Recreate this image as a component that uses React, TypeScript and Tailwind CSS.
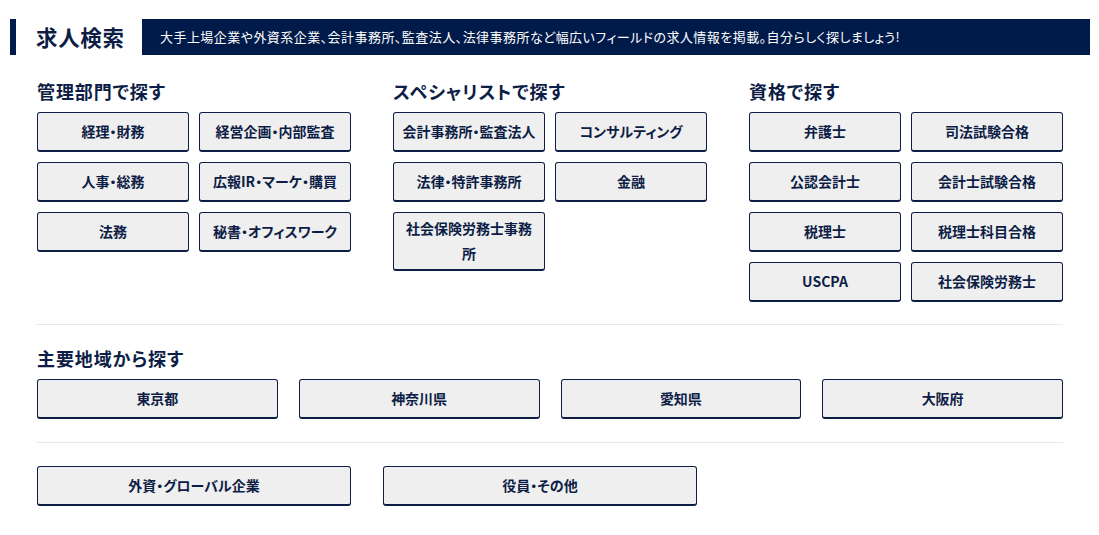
import React from "react";

const NAVY = "text-[#0d1d45]";

function Btn({ label, className = "" }: { label: string; className?: string }) {
  return (
    <a
      href="#"
      className={`flex min-h-[40px] items-center justify-center rounded-[3px] border border-b-2 border-[#0d1d45] bg-[#efefef] px-[7px] py-[3px] text-center text-[14px] font-bold leading-[25px] ${NAVY} ${className}`}
    >
      {label}
    </a>
  );
}

function Heading({ children }: { children: React.ReactNode }) {
  return (
    <h3 className={`mb-[9px] text-[18px] font-bold leading-[24px] tracking-[0.05em] ${NAVY}`}>{children}</h3>
  );
}

function Col({ title, items }: { title: string; items: string[] }) {
  return (
    <div>
      <Heading>{title}</Heading>
      <div className="grid grid-cols-2 gap-x-[10px] gap-y-[10px] items-start">
        {items.map((i) => (
          <Btn key={i} label={i} />
        ))}
      </div>
    </div>
  );
}

export default function App() {
  return (
    <div
      className="w-[1099px] min-h-[535px] bg-white [font-feature-settings:'palt']"
      style={{ fontFamily: '"Noto Sans CJK JP", "Noto Sans", sans-serif' }}
    >
      <div className="flex items-stretch pl-[10px] pr-[9px] pt-[19px]">
        <div className="w-[6px] bg-[#001a4a]" />
        <div className={`flex h-[36px] w-[126px] items-center pl-[20px] text-[21.5px] font-bold tracking-[0.03em] ${NAVY}`}>求人検索</div>
        <div className="flex flex-1 items-center bg-[#001a4a] pl-[18px] text-[13px] tracking-[0.035em] text-white">
          大手上場企業や外資系企業、会計事務所、監査法人、法律事務所など幅広いフィールドの求人情報を掲載。自分らしく探しましょう!
        </div>
      </div>

      <div className="mx-[37px] w-[1026px]">
        <div className="mt-[24px] grid grid-cols-3 gap-x-[42px]">
          <Col title="管理部門で探す" items={["経理・財務", "経営企画・内部監査", "人事・総務", "広報IR・マーケ・購買", "法務", "秘書・オフィスワーク"]} />
          <Col title="スペシャリストで探す" items={["会計事務所・監査法人", "コンサルティング", "法律・特許事務所", "金融", "社会保険労務士事務所"]} />
          <Col title="資格で探す" items={["弁護士", "司法試験合格", "公認会計士", "会計士試験合格", "税理士", "税理士科目合格", "USCPA", "社会保険労務士"]} />
        </div>

        <div className="mt-[22px] h-px bg-[#e8e8e8]" />

        <div className="mt-[21px]">
          <Heading>主要地域から探す</Heading>
          <div className="grid grid-cols-4 gap-x-[21px]">
            {["東京都", "神奈川県", "愛知県", "大阪府"].map((p) => (
              <Btn key={p} label={p} />
            ))}
          </div>
        </div>

        <div className="mt-[23px] h-px bg-[#e8e8e8]" />

        <div className="mt-[23px] flex gap-x-[32px]">
          <Btn label="外資・グローバル企業" className="w-[314px]" />
          <Btn label="役員・その他" className="w-[314px]" />
        </div>
      </div>
    </div>
  );
}
